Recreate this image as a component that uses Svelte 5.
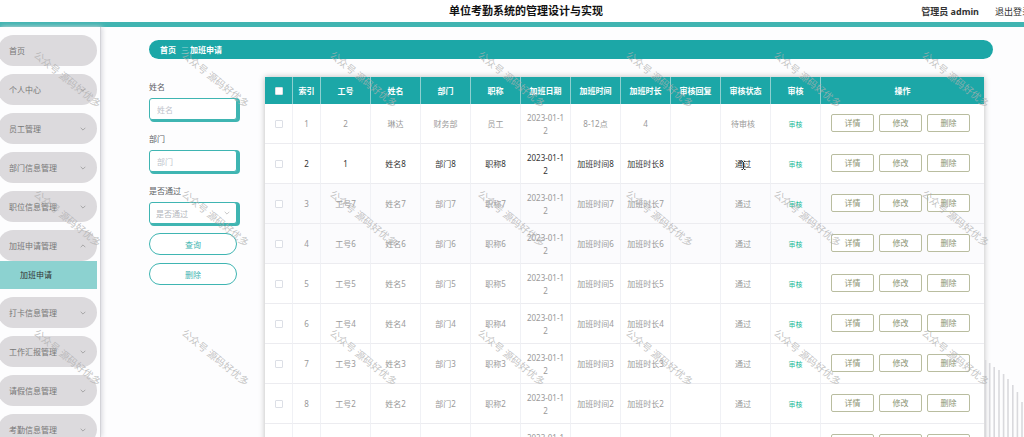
<script>
const menu=[
    {name:'首页', arrow:false},
    {name:'个人中心', arrow:true},
    {name:'员工管理', arrow:true},
    {name:'部门信息管理', arrow:true},
    {name:'职位信息管理', arrow:true},
    {name:'加班申请管理', arrow:true, children:['加班申请']},
    {name:'打卡信息管理', arrow:true},
    {name:'工作汇报管理', arrow:true},
    {name:'请假信息管理', arrow:true},
    {name:'考勤信息管理', arrow:true},
];
const columns=['索引','工号','姓名','部门','职称','加班日期','加班时间','加班时长','审核回复','审核状态','审核','操作'];
const actions=['详情','修改','删除'];

const makeRow=(n)=>['工号'+n,'姓名'+n,'部门'+n,'职称'+n,'2023-01-12','加班时间'+n,'加班时长'+n,'','通过'];

const rows=[
    ['2','琳达','财务部','员工','2023-01-12','8-12点','4','','待审核'],
    ['1',...makeRow(8).slice(1)],
    ...[7,6,5,4,3,2,1].map(makeRow),
];

let opened=$state('加班申请管理');
let hovered=$state(1);

const toggle=(name)=>{
    opened = opened==name ? '' : name;
}
</script>

<div class="page">
    <header>
        <h1>单位考勤系统的管理设计与实现</h1>
        <div class="user">
            <b>管理员 admin</b>
            <a href="#logout">退出登录</a>
        </div>
    </header>

    <div class="body">
        <nav>
            {#each menu as item}
                <button class="menu" onclick={()=>toggle(item.name)}>
                    <span>{item.name}</span>
                    {#if item.arrow}
                        <svg class="arrow" class:up={opened==item.name} viewBox="0 0 6 6"><path d="M0.7 1.8L3 4.1L5.3 1.8"/></svg>
                    {/if}
                </button>
                {#if item.children && opened==item.name}
                    {#each item.children as child}
                        <a class="child" href="#overtime">{child}</a>
                    {/each}
                {/if}
            {/each}
        </nav>

        <main>
            <div class="crumb">
                <b>首页</b><span class="sep">三</span><b>加班申请</b>
            </div>

            <div class="content">
                <form onsubmit={(e)=>e.preventDefault()}>
                    <label for="name">姓名</label>
                    <input class="field" id="name" type="text" placeholder="姓名">
                    <label for="dept">部门</label>
                    <input class="field" id="dept" type="text" placeholder="部门">
                    <label for="pass">是否通过</label>
                    <div class="select">
                        <select class="field" id="pass">
                            <option value="">是否通过</option>
                            <option>是</option>
                            <option>否</option>
                        </select>
                        <svg class="arrow" viewBox="0 0 6 6"><path d="M0.7 1.8L3 4.1L5.3 1.8"/></svg>
                    </div>
                    <button class="round">查询</button>
                    <button class="round" type="button">删除</button>
                </form>

                <div class="list">
                    <table>
                        <colgroup>
                            <col class="small"><col class="small">
                            {#each {length:10} as _}
                                <col class="mid">
                            {/each}
                            <col>
                        </colgroup>
                        <thead>
                            <tr>
                                <th><input type="checkbox" aria-label="全选"></th>
                                {#each columns as c}
                                    <th>{c}</th>
                                {/each}
                            </tr>
                        </thead>
                        <tbody>
                            {#each rows as row,i}
                                <tr class:active={hovered==i} onmouseenter={()=>hovered=i}>
                                    <td><input type="checkbox" aria-label="选择 {i+1}"></td>
                                    <td>{i+1}</td>
                                    {#each row as cell,j}
                                        <td class:status={j==8}>
                                            {cell}
                                            {#if hovered==i && j==8}
                                                <svg class="caret" viewBox="0 0 5 9"><path d="M0.5 0.5H2M3 0.5H4.5M2.5 1V8M0.5 8.5H2M3 8.5H4.5"/></svg>
                                            {/if}
                                        </td>
                                    {/each}
                                    <td><button class="check">审核</button></td>
                                    <td>
                                        <div class="actions">
                                            {#each actions as a}
                                                <button>{a}</button>
                                            {/each}
                                        </div>
                                    </td>
                                </tr>
                            {/each}
                        </tbody>
                    </table>
                </div>
            </div>
        </main>
    </div>

    <svg class="stripes" viewBox="0 0 40 80">
        <path d="M1.5 3V80M5.7 6V80M10.2 10V80M15 13V80M19.6 17V80M24 22V80M28.8 28V80M33.4 35V80M38 45V80"/>
    </svg>

    <div class="marks" aria-hidden="true">
        {#each {length:21} as _}
            <span>公众号 源码好优多</span>
        {/each}
    </div>
</div>

<style>
:global(body){
    background:#fdfdfe;
}
.page{
    position:relative;
    height:100vh;
    overflow:hidden;
    display:flex;
    flex-direction:column;
    font-family:'Noto Sans','Noto Sans CJK SC',sans-serif;
    font-size:8px;
    line-height:13px;
    color:#606266;
}
.page *{
    box-sizing:border-box;
}
button,input,select{
    font:inherit;
    color:inherit;
    margin:0;
}
button{
    cursor:pointer;
    background:none;
    padding:0;
}
a{
    color:inherit;
    text-decoration:none;
}
header{
    flex:none;
    display:grid;
    grid-template-columns:1fr auto 1fr;
    align-items:center;
    height:27px;
    border-bottom:5px solid #40b4b1;
    background:#fff;
}
h1{
    grid-column:2;
    margin:0 0 0 28px;
    font-size:11px;
    line-height:22px;
    color:#111;
}
.user{
    display:flex;
    justify-content:flex-end;
    gap:16px;
    margin-right:-7px;
    font-size:9px;
    color:#333;
    white-space:nowrap;
}
.body{
    flex:1;
    min-height:0;
    display:flex;
}
nav{
    flex:none;
    width:101px;
    padding-top:8px;
    border-right:1px solid #d3d3d8;
    box-shadow:1px 0 5px #d4d4da;
    background:#fdfdfe;
}
.menu{
    display:flex;
    align-items:center;
    justify-content:space-between;
    width:99px;
    height:31px;
    margin:0 0 8px -2px;
    padding:0 11px;
    border:0;
    border-radius:16px;
    background:#dcdadd;
    color:#777;
}
.arrow{
    width:6px;
    height:6px;
    fill:none;
    stroke:#999;
    stroke-width:0.8;
}
.up{
    transform:rotate(180deg);
}
.child{
    display:block;
    width:97px;
    margin:-8px 0 8px;
    padding-left:20px;
    line-height:28px;
    background:#8cd2d0;
    color:#333;
}
main{
    flex:1;
    min-width:0;
    padding:13px 31px 0 48px;
}
.crumb{
    display:flex;
    align-items:center;
    height:19px;
    padding-left:11px;
    border-radius:10px;
    background:#1ca7a7;
    color:#fff;
}
.sep{
    margin:0 1px 0 5px;
    color:#9cd6d6;
}
.content{
    display:flex;
    align-items:flex-start;
    gap:28px;
    margin-top:18px;
}
form{
    flex:none;
    width:88px;
    padding-top:3px;
}
label{
    display:block;
    line-height:13px;
    margin-bottom:5px;
}
.field{
    display:block;
    width:100%;
    height:22px;
    margin-bottom:12px;
    padding:0 7px;
    border:1px solid #3fb5b2;
    border-radius:3px;
    box-shadow:2px 1px 0 1px #3fb5b2;
    background:#fff;
    color:#b4b6bc;
    outline:none;
    appearance:none;
}
.field::placeholder{
    color:#c0c4cc;
}
.select{
    position:relative;
}
.select .field{
    margin-bottom:9px;
    padding:0 6px;
}
.select .arrow{
    position:absolute;
    right:7px;
    top:8px;
    stroke:#bbb;
}
.round{
    display:block;
    width:100%;
    height:22px;
    margin-bottom:8px;
    border:1px solid #3fb5b2;
    border-radius:11px;
    background:#fff;
    color:#3fb5b2;
}
.list{
    flex:1;
    min-width:0;
    margin-right:9px;
    box-shadow:0 0 6px #bbb;
    background:#fff;
}
table{
    width:100%;
    table-layout:fixed;
    border-collapse:separate;
    border-spacing:0;
    text-align:center;
}
.small{
    width:28px;
}
.mid{
    width:50px;
}
th{
    height:27px;
    padding:0;
    background:#1ca7a7;
    border-right:1px solid #8dd0d0;
    color:#fff;
}
th:last-child,td:last-child{
    border-right:0;
}
td{
    height:40px;
    padding:0 5px;
    border-right:1px solid #f0f1f5;
    border-bottom:1px solid #ececf0;
    color:#999;
    word-break:break-all;
}
td:first-child{
    padding:0;
}
td:nth-child(8),td:nth-child(9){
    padding:0;
}
tr:nth-child(3) td,tr:nth-child(4) td{
    background:#fbfbfd;
}
.active td{
    color:#333;
}
.status{
    padding-right:10px;
}
input[type=checkbox]{
    display:block;
    width:8px;
    height:8px;
    margin:0 auto;
    appearance:none;
    border:1px solid #dcdfe6;
    border-radius:1px;
    background:#fff;
}
.caret{
    position:absolute;
    width:5px;
    height:9px;
    margin-left:-10px;
    margin-top:4px;
    fill:none;
    stroke:#333;
    stroke-width:1;
}
.check{
    border:0;
    font-size:7px;
    color:#1dbb9b;
}
.actions{
    display:flex;
    gap:5px;
    padding:0 0 2px 5px;
}
.actions button{
    width:43px;
    height:18px;
    border:1px solid #b9bd9f;
    border-radius:2px;
    background:#fff;
    color:#8c9474;
}
.stripes{
    position:absolute;
    right:0;
    bottom:0;
    width:40px;
    height:80px;
    stroke:#d9d9dd;
    stroke-width:1.6;
}
.marks{
    position:absolute;
    left:-7px;
    top:10px;
    display:grid;
    grid-template-columns:repeat(7,148px);
    grid-auto-rows:139px;
    place-items:center;
    pointer-events:none;
    font-size:10px;
    color:rgba(175,175,175,0.75);
    white-space:nowrap;
}
.marks span{
    transform:rotate(39deg);
}
</style>
